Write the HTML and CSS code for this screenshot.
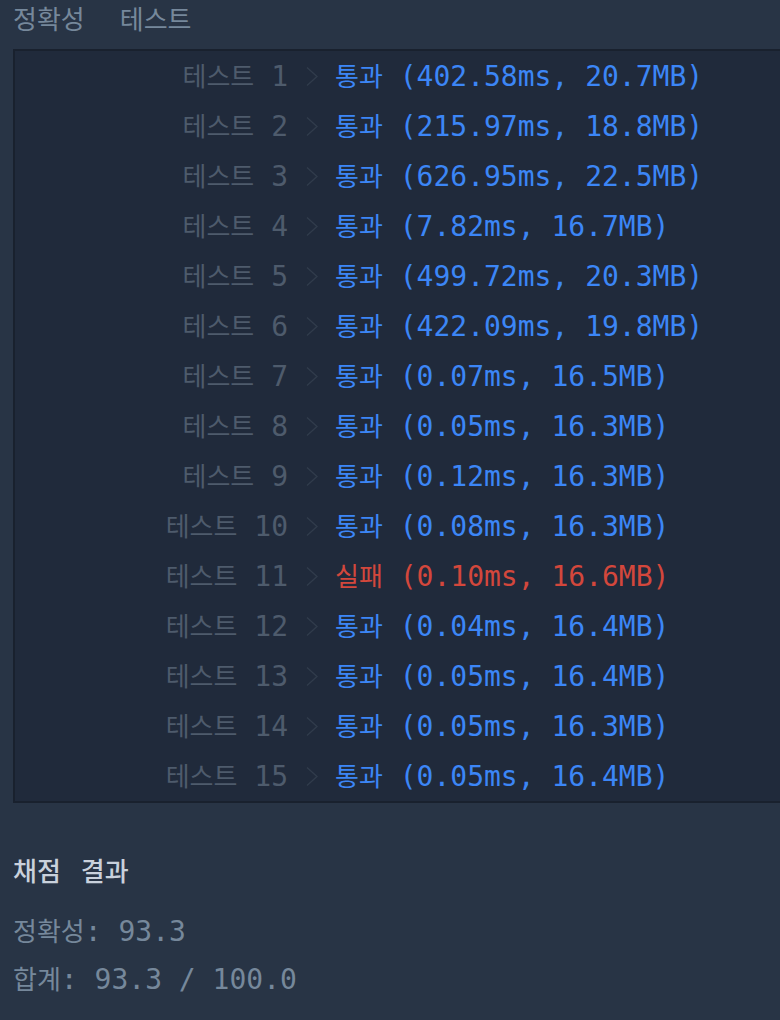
FILE: index.html
```html
<!DOCTYPE html>
<html lang="ko">
<head>
    <meta charset="UTF-8">
    <title>채점 결과</title>
    <link rel="stylesheet" href="styles.css">
</head>
<body>
    <div id="page">
        <div id="section-title">
            <span class="ko">정확성</span>
            <span class="ko">테스트</span>
        </div>
        <div id="result-table">
            <div class="row"><div class="label"><span class="ko">테스트</span> 1</div><svg class="chevron" viewBox="0 0 12 20"><path d="M1 1 L11 10 L1 19"/></svg><div class="result pass"><span class="ko">통과</span> (402.58ms, 20.7MB)</div></div>
            <div class="row"><div class="label"><span class="ko">테스트</span> 2</div><svg class="chevron" viewBox="0 0 12 20"><path d="M1 1 L11 10 L1 19"/></svg><div class="result pass"><span class="ko">통과</span> (215.97ms, 18.8MB)</div></div>
            <div class="row"><div class="label"><span class="ko">테스트</span> 3</div><svg class="chevron" viewBox="0 0 12 20"><path d="M1 1 L11 10 L1 19"/></svg><div class="result pass"><span class="ko">통과</span> (626.95ms, 22.5MB)</div></div>
            <div class="row"><div class="label"><span class="ko">테스트</span> 4</div><svg class="chevron" viewBox="0 0 12 20"><path d="M1 1 L11 10 L1 19"/></svg><div class="result pass"><span class="ko">통과</span> (7.82ms, 16.7MB)</div></div>
            <div class="row"><div class="label"><span class="ko">테스트</span> 5</div><svg class="chevron" viewBox="0 0 12 20"><path d="M1 1 L11 10 L1 19"/></svg><div class="result pass"><span class="ko">통과</span> (499.72ms, 20.3MB)</div></div>
            <div class="row"><div class="label"><span class="ko">테스트</span> 6</div><svg class="chevron" viewBox="0 0 12 20"><path d="M1 1 L11 10 L1 19"/></svg><div class="result pass"><span class="ko">통과</span> (422.09ms, 19.8MB)</div></div>
            <div class="row"><div class="label"><span class="ko">테스트</span> 7</div><svg class="chevron" viewBox="0 0 12 20"><path d="M1 1 L11 10 L1 19"/></svg><div class="result pass"><span class="ko">통과</span> (0.07ms, 16.5MB)</div></div>
            <div class="row"><div class="label"><span class="ko">테스트</span> 8</div><svg class="chevron" viewBox="0 0 12 20"><path d="M1 1 L11 10 L1 19"/></svg><div class="result pass"><span class="ko">통과</span> (0.05ms, 16.3MB)</div></div>
            <div class="row"><div class="label"><span class="ko">테스트</span> 9</div><svg class="chevron" viewBox="0 0 12 20"><path d="M1 1 L11 10 L1 19"/></svg><div class="result pass"><span class="ko">통과</span> (0.12ms, 16.3MB)</div></div>
            <div class="row"><div class="label"><span class="ko">테스트</span> 10</div><svg class="chevron" viewBox="0 0 12 20"><path d="M1 1 L11 10 L1 19"/></svg><div class="result pass"><span class="ko">통과</span> (0.08ms, 16.3MB)</div></div>
            <div class="row"><div class="label"><span class="ko">테스트</span> 11</div><svg class="chevron" viewBox="0 0 12 20"><path d="M1 1 L11 10 L1 19"/></svg><div class="result fail"><span class="ko">실패</span> (0.10ms, 16.6MB)</div></div>
            <div class="row"><div class="label"><span class="ko">테스트</span> 12</div><svg class="chevron" viewBox="0 0 12 20"><path d="M1 1 L11 10 L1 19"/></svg><div class="result pass"><span class="ko">통과</span> (0.04ms, 16.4MB)</div></div>
            <div class="row"><div class="label"><span class="ko">테스트</span> 13</div><svg class="chevron" viewBox="0 0 12 20"><path d="M1 1 L11 10 L1 19"/></svg><div class="result pass"><span class="ko">통과</span> (0.05ms, 16.4MB)</div></div>
            <div class="row"><div class="label"><span class="ko">테스트</span> 14</div><svg class="chevron" viewBox="0 0 12 20"><path d="M1 1 L11 10 L1 19"/></svg><div class="result pass"><span class="ko">통과</span> (0.05ms, 16.3MB)</div></div>
            <div class="row"><div class="label"><span class="ko">테스트</span> 15</div><svg class="chevron" viewBox="0 0 12 20"><path d="M1 1 L11 10 L1 19"/></svg><div class="result pass"><span class="ko">통과</span> (0.05ms, 16.4MB)</div></div>
        </div>
        <div id="summary">
            <div id="summary-title"><span class="ko">채점</span><span class="ko">결과</span></div>
            <div class="summary-line"><span class="ko">정확성</span>: 93.3</div>
            <div class="summary-line"><span class="ko">합계</span>: 93.3 / 100.0</div>
        </div>
    </div>
</body>
</html>
```

FILE: styles.css
```css
body {
    margin: 0;
    background-color: #283445;
    overflow: hidden;
    font-family: "DejaVu Sans Mono", "Noto Sans CJK KR", monospace;
    font-size: 28px;
}
#page {
    padding-left: 13px;
}
.ko {
    font-family: "Noto Sans CJK KR", sans-serif;
    font-size: 26px;
}
#section-title {
    display: flex;
    gap: 35px;
    height: 36px;
    line-height: 36px;
    color: #76889b;
    margin-bottom: 13px;
}
#result-table {
    width: 800px;
    background-color: #202a3b;
    border: 2px solid #19212e;
}
.row {
    display: flex;
    align-items: center;
    height: 50px;
    line-height: 50px;
    white-space: nowrap;
}
.label {
    width: 273px;
    text-align: right;
    color: #4e5b6c;
}
.chevron {
    width: 12px;
    height: 21px;
    margin-left: 18px;
    margin-right: 17px;
    fill: none;
    stroke: #313c4c;
    stroke-width: 1.3;
}
.result.pass {
    color: #3c86f6;
}
.result.fail {
    color: #d3473c;
}
#summary {
    padding-top: 49px;
}
#summary-title {
    display: flex;
    gap: 20px;
    height: 36px;
    line-height: 36px;
    color: #c9d1dc;
    font-weight: 500;
    margin-bottom: 24px;
}
.summary-line {
    height: 48px;
    line-height: 36px;
    color: #76889b;
    white-space: nowrap;
}
```
